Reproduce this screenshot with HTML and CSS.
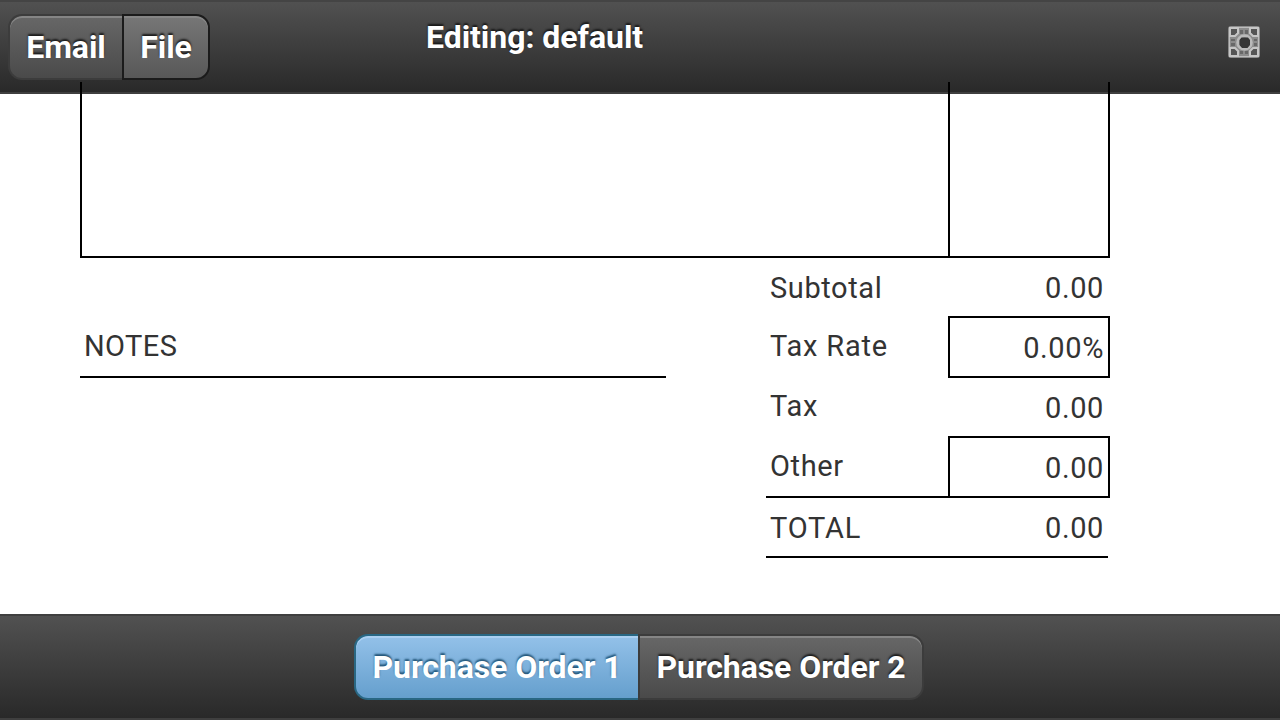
FILE: index.html
```html
<!DOCTYPE html>
<html lang="en">
<head>
<meta charset="utf-8">
<title>Editing: default</title>
<link rel="stylesheet" href="styles.css">
</head>
<body>
<header class="bar header">
  <div class="segment">
    <button class="btn email">Email</button>
    <button class="btn file">File</button>
  </div>
  <h1 class="title">Editing: default</h1>
  <svg class="expand" width="32" height="32" viewBox="0 0 32 32" aria-label="Full screen">
    <defs><filter id="soften" x="0" y="0" width="1" height="1"><feGaussianBlur stdDeviation="0.75"/></filter></defs>
    <rect width="32" height="32" rx="3" fill="#8c8c8c"/>
    <g filter="url(#soften)">
      <rect x="1" y="1" width="30" height="30" rx="2" fill="none" stroke="#bdbdbd" stroke-width="2"/>
      <g fill="#555" stroke="#c6c6c6" stroke-width="2">
        <path d="M2 2H10V7L7 10H2Z"/><path d="M30 2H22V7L25 10H30Z"/>
        <path d="M2 30H10V25L7 22H2Z"/><path d="M30 30H22V25L25 22H30Z"/>
      </g>
      <g fill="#686868">
        <rect x="12" y="4" width="3" height="4"/><rect x="17" y="4" width="3" height="4"/>
        <rect x="12" y="25" width="3" height="3"/><rect x="17" y="25" width="3" height="3"/>
        <rect x="3" y="13" width="4" height="2"/><rect x="3" y="17" width="4" height="3"/>
        <rect x="26" y="13" width="3" height="2"/><rect x="26" y="17" width="3" height="3"/>
      </g>
      <circle cx="16.5" cy="16.5" r="6.8" fill="none" stroke="#bababa" stroke-width="3"/>
      <path d="M13.5 11.5H20L22 14V19L19.5 22H14L11.5 19V14Z" fill="#343434"/>
    </g>
  </svg>
</header>
<main class="sheet">
  <div class="items"><div class="description"></div><div class="amount"></div></div>
  <div class="summary">
    <section class="notes">NOTES</section>
    <section class="totals">
      <div class="row subtotal"><span class="label">Subtotal</span><span class="value">0.00</span></div>
      <div class="row rate"><span class="label">Tax Rate</span><span class="value boxed">0.00%</span></div>
      <div class="row tax"><span class="label">Tax</span><span class="value">0.00</span></div>
      <div class="row other"><span class="label">Other</span><span class="value boxed">0.00</span></div>
      <div class="row total"><span class="label">TOTAL</span><span class="value">0.00</span></div>
    </section>
  </div>
</main>
<footer class="bar footer">
  <div class="segment">
    <button class="btn active">Purchase Order 1</button>
    <button class="btn order">Purchase Order 2</button>
  </div>
</footer>
</body>
</html>
```
FILE: styles.css
```css
* { box-sizing: border-box; }
body {
  margin: 0;
  width: 1280px;
  height: 720px;
  display: flex;
  flex-direction: column;
  overflow: hidden;
  background: #fff;
  font-family: Roboto, "Liberation Sans", sans-serif;
}
.bar {
  display: flex;
  flex: none;
  border: solid #3f3f3f;
  border-width: 2px 0;
  background: linear-gradient(#515151, #292929);
  color: #fff;
}
.header { height: 94px; padding: 12px 20px 0 8px; border-top-color: #444; }
.footer { height: 106px; padding-top: 18px; justify-content: center; padding-right: 2px; }
.segment { display: flex; height: 66px; }
.btn {
  height: 66px;
  padding: 0;
  border: 2px solid #3c3c3c;
  background: linear-gradient(#676767, #4a4a4a);
  box-shadow: inset 0 2px 0 #858585;
  color: #fff;
  font: bold 32px/62px Roboto, "Liberation Sans", sans-serif;
  letter-spacing: -0.08px;
  text-shadow: 0 -2px 2px #1b1b1b;
  white-space: nowrap;
}
.email { width: 114px; border-right: 0; border-radius: 14px 0 0 14px; }
.file {
  width: 88px;
  border-color: #1b1b1b;
  border-radius: 0 14px 14px 0;
  background: linear-gradient(#777, #585858);
}
.active {
  width: 284px;
  border-color: #296783;
  border-right: 0;
  border-radius: 14px 0 0 14px;
  background: linear-gradient(#93c1e9, #659fcd);
  box-shadow: inset 0 2px 0 #aacff1;
  text-shadow: 0 -2px 2px #225578;
}
.order { width: 286px; border-radius: 0 14px 14px 0; }
.title {
  margin: 5px 0 0 216px;
  font: bold 32px/36px Roboto, "Liberation Sans", sans-serif;
  letter-spacing: -0.04px;
  text-shadow: 0 -2px 2px #181818;
}
.expand { margin: 12px 0 0 auto; }
.sheet {
  position: relative;
  flex: 1;
  margin-top: -12px;
  padding: 0 170px 0 80px;
  color: #333;
  font-size: 29px;
  line-height: 34px;
  letter-spacing: 0.6px;
}
.items { display: flex; height: 176px; border: solid #000; border-width: 0 2px 2px; }
.description { flex: 1; }
.amount { width: 160px; border-left: 2px solid #000; }
.summary { display: flex; justify-content: space-between; }
.notes { width: 586px; height: 120px; padding: 71px 4px 0; border-bottom: 2px solid #000; letter-spacing: 0.4px; }
.totals { width: 344px; }
.row { display: flex; }
.label { flex: 1; padding: 0 4px; }
.value { width: 162px; padding-right: 6px; text-align: right; }
.boxed { border: 2px solid #000; padding-right: 4px; }
.subtotal { height: 58px; padding-top: 13px; }
.rate, .other { height: 62px; }
.rate .label, .other .label { padding-top: 13px; }
.rate .label, .tax .label, .total .label { letter-spacing: 0.8px; }
.boxed { padding-top: 13px; }
.tax { height: 58px; }
.tax .label { padding-top: 11px; }
.tax .value { padding-top: 13px; }
.other .label { border-bottom: 2px solid #000; }
.total { height: 60px; width: 342px; padding-top: 13px; border-bottom: 2px solid #000; }
.total .value { width: 160px; padding-right: 4px; }
```
